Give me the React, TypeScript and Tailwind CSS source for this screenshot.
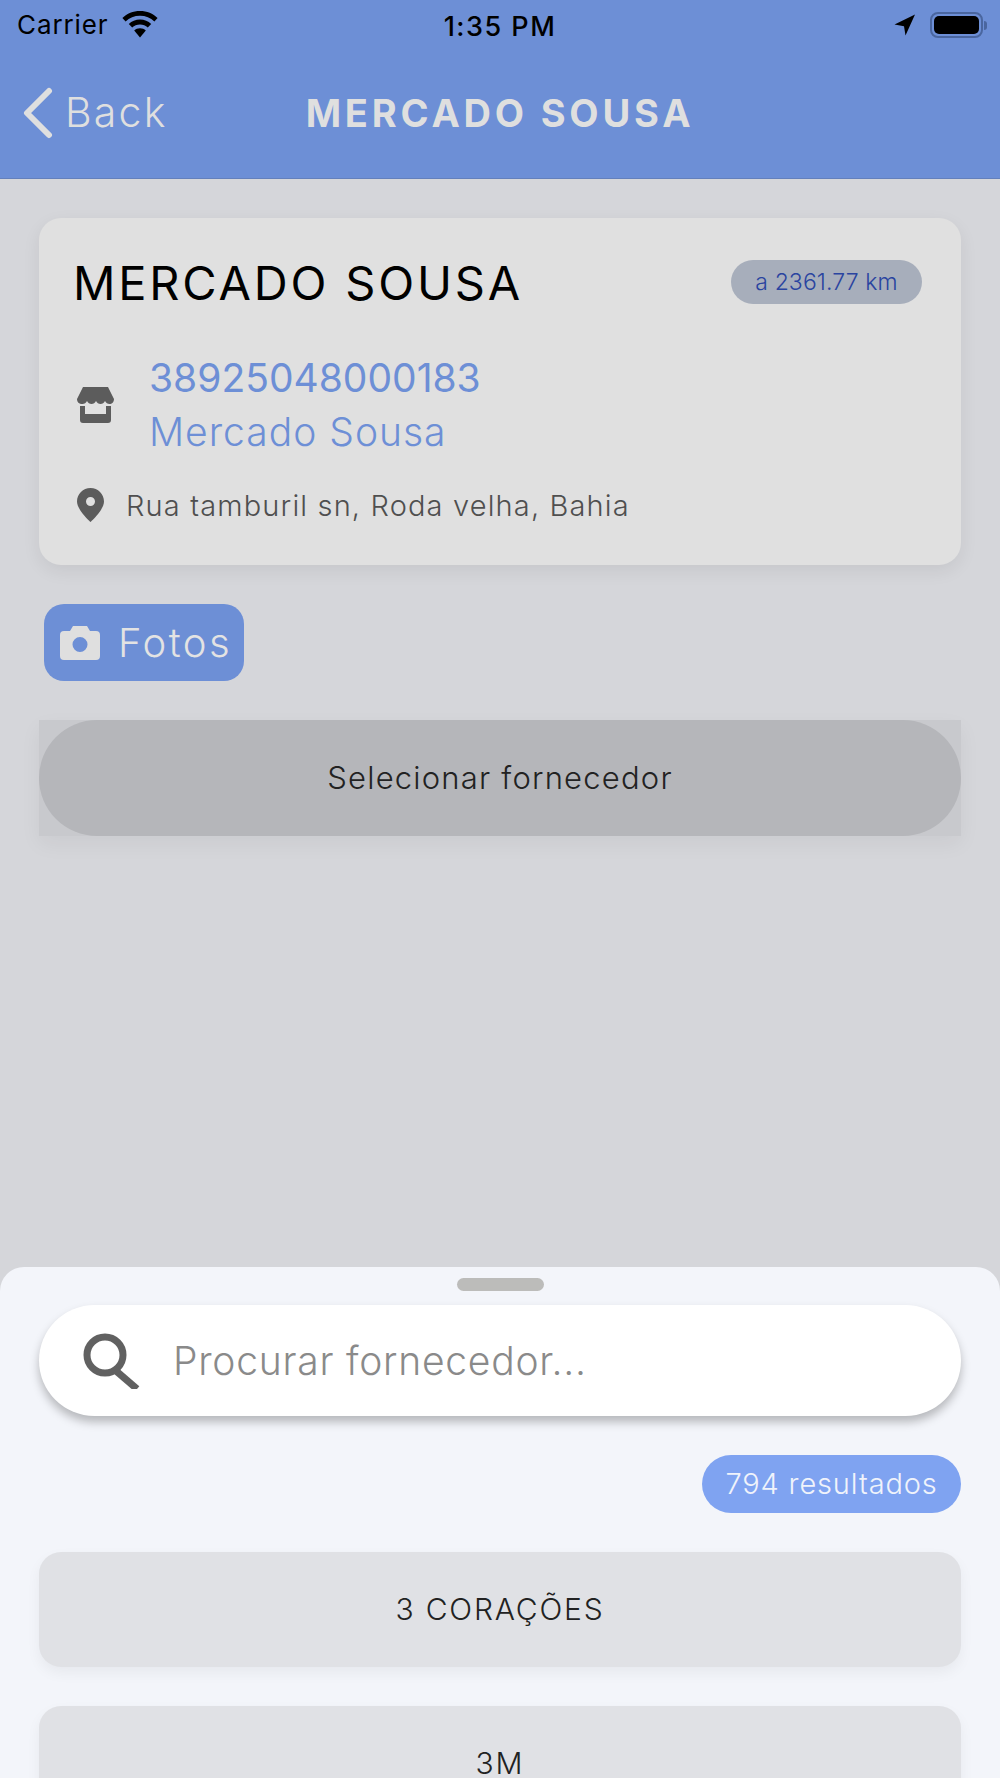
const font = "[font-family:Inter,'Liberation_Sans',sans-serif]";

function Wifi() {
  return (
    <svg width="36" height="27" viewBox="0 0 36 27" fill="#000">
      <path d="M18 0C11 0 5 2.6 0.4 7L3.6 10.4C7.4 6.8 12.4 4.8 18 4.8s10.6 2 14.400 5.600L35.600 7C31 2.600 25 0 18 0z" />
      <path d="M18 8.600c-4.400 0-8.300 1.700-11.200 4.400l3.400 3.400c2-1.900 4.800-3 7.800-3s5.800 1.100 7.800 3l3.400-3.400C26.300 10.300 22.400 8.600 18 8.600z" />
      <path d="M18 17.200c-2.300 0-4.300.9-5.800 2.300L18 26.600l5.800-7.100c-1.500-1.400-3.500-2.300-5.800-2.300z" />
    </svg>
  );
}

function StatusBar() {
  return (
    <div className="relative flex h-[46px] items-center pl-[17px] pr-[13px] pt-[4px] text-black">
      <span className="text-[26px] leading-none font-['Inter'] tracking-[0.9px]">Carrier</span>
      <span className="ml-[13px] -mt-[2px]"><Wifi /></span>
      <span className="absolute left-0 right-0 top-[13px] text-center text-[27px] leading-none font-medium font-['Inter'] tracking-[1.5px]">1:35 PM</span>
      <div className="ml-auto flex items-center">
        <svg width="22" height="22" viewBox="0 0 22 22" fill="#000" className="mr-[14px]">
          <path d="M21 0.500L0.500 10.500L10 12.200L11.500 21.500z" />
        </svg>
        <div className="flex items-center">
          <div className="flex h-[26px] w-[53px] items-center justify-center rounded-[8px] border-[2px] border-[#4a669f]">
            <div className="h-[18px] w-[45px] rounded-[5px] bg-black" />
          </div>
          <div className="ml-[1px] h-[9px] w-[3px] rounded-r-full bg-[#4a669f]" />
        </div>
      </div>
    </div>
  );
}

function Header() {
  return (
    <div className="h-[179px] bg-[#6d8fd6] border-b border-[#6480bb]">
      <StatusBar />
      <div className="relative flex h-[133px] items-center pl-[23px] text-[#dfdfdf]">
        <svg width="30" height="52" viewBox="0 0 30 52" fill="none" stroke="#dfdfdf" strokeWidth="6" strokeLinecap="round" strokeLinejoin="round">
          <path d="M26 4L4 26l22 22" />
        </svg>
        <span className="ml-[12px] text-[41px] leading-none font-light tracking-[2.200px]">Back</span>
        <span className="absolute left-0 right-0 text-center text-[38px] leading-none font-bold tracking-[3.800px]">MERCADO SOUSA</span>
      </div>
    </div>
  );
}

function StoreCard() {
  return (
    <div className="relative rounded-[22px] bg-[#e0e0e0] h-[347px] pt-[35px] pl-[34px] pr-[39px] shadow-[0_6px_18px_rgba(0,0,0,0.07)]">
      <div className="flex items-center justify-between h-[58px]">
        <span className="text-[47px] leading-none text-black tracking-[2.800px]">MERCADO SOUSA</span>
        <span className="flex h-[44px] w-[191px] items-center justify-center rounded-full bg-[#a7aebb] text-[23px] font-light text-[#2a44a0] tracking-[0.100px]">a 2361.77 km</span>
      </div>
      <div className="mt-[42px] flex items-center pl-[4px]">
        <svg width="37" height="36" viewBox="0 0 37 36" fill="#5c5c5c">
          <path d="M6 0h25l6 12c0 3-2 5-4.500 5-2 0-3.500-1-4.500-3-1 2-2.500 3-4.500 3s-3.500-1-4.500-3c-1 2-2.500 3-4.500 3s-3.500-1-4.500-3c-1 2-2.500 3-4.500 3C2 17 0 15 0 12z" />
          <path d="M3 19h5v8h21v-8h5v14a3 3 0 0 1-3 3H6a3 3 0 0 1-3-3z" />
        </svg>
        <div className="ml-[35px] text-[#6d8fd6]">
          <div className="text-[39px] leading-[50px] font-normal">38925048000183</div>
          <div className="text-[39px] leading-[50px] font-light mt-[4px] tracking-[1px]">Mercado Sousa</div>
        </div>
      </div>
      <div className="mt-[31px] flex items-center pl-[4px]">
        <svg width="27" height="34" viewBox="0 0 27 34" fill="#5c5c5c">
          <path fillRule="evenodd" d="M13.500 0C6 0 0 6 0 13.500C0 22 13.500 34 13.500 34S27 22 27 13.500C27 6 21 0 13.500 0zm0 9a4.500 4.500 0 1 1 0 9 4.500 4.500 0 0 1 0-9z" />
        </svg>
        <span className="ml-[22px] text-[29px] leading-none font-light text-[#4f4f4f] tracking-[1.150px]">Rua tamburil sn, Roda velha, Bahia</span>
      </div>
    </div>
  );
}

function SheetRow({ label }: { label: string }) {
  return (
    <div className="flex h-[115px] shrink-0 items-center justify-center rounded-[22px] bg-[#e0e1e5] text-[30px] font-light text-[#222] tracking-[1.800px] shadow-[0_6px_14px_rgba(0,0,0,0.05)]">
      {label}
    </div>
  );
}

export default function App() {
  return (
    <div className={`relative flex h-[1778px] w-[1000px] flex-col overflow-hidden bg-[#d5d6da] ${font}`}>
      <Header />
      <div className="flex-1 px-[39px] pt-[39px]">
        <StoreCard />
        <div className="ml-[5px] mt-[39px] flex h-[77px] w-[200px] items-center rounded-[20px] bg-[#6d8fd6] pl-[16px]">
          <svg width="40" height="34" viewBox="0 0 40 34" fill="#dfdfdf">
            <path fillRule="evenodd" d="M13 0h14l3 5h6a4 4 0 0 1 4 4v21a4 4 0 0 1-4 4H4a4 4 0 0 1-4-4V9a4 4 0 0 1 4-4h6zm7 11a7.500 7.500 0 1 0 0 15 7.500 7.500 0 0 0 0-15z" />
          </svg>
          <span className="ml-[18px] text-[40px] leading-none font-light text-[#e3e3e3] tracking-[2.500px]">Fotos</span>
        </div>
        <div className="mt-[39px] h-[116px] bg-[#c8c9cd] shadow-[0_8px_20px_rgba(0,0,0,0.05)]">
          <div className="flex h-full items-center justify-center rounded-full bg-[#b5b6ba] text-[31px] font-light text-[#222] tracking-[1.200px]">
            Selecionar fornecedor
          </div>
        </div>
      </div>
      <div className="flex h-[511px] flex-col rounded-t-[24px] bg-[#f3f5fa] px-[39px]">
        <div className="mx-auto mt-[11px] h-[13px] w-[87px] shrink-0 rounded-full bg-[#bcbcba]" />
        <div className="mt-[14px] flex h-[111px] shrink-0 items-center rounded-full bg-white pl-[43px] shadow-[0_6px_10px_rgba(0,0,0,0.25)]">
          <svg width="58" height="57" viewBox="0 0 58 57" fill="none" stroke="#616161" strokeWidth="7">
            <circle cx="23" cy="23" r="18" />
            <path d="M33 38l22 19" strokeWidth="7" />
          </svg>
          <span className="ml-[33px] text-[39px] leading-none font-light text-[#8a8a8a] tracking-[0.750px]">Procurar fornecedor...</span>
        </div>
        <div className="mt-[39px] flex shrink-0 justify-end">
          <div className="flex h-[58px] w-[259px] items-center justify-center rounded-full bg-[#7fa3f1] text-[29px] font-light text-[#f0f3fb] tracking-[0.850px]">
            794 resultados
          </div>
        </div>
        <div className="mt-[39px] flex flex-col gap-[39px]">
          <SheetRow label="3 CORAÇÕES" />
          <SheetRow label="3M" />
        </div>
      </div>
    </div>
  );
}
